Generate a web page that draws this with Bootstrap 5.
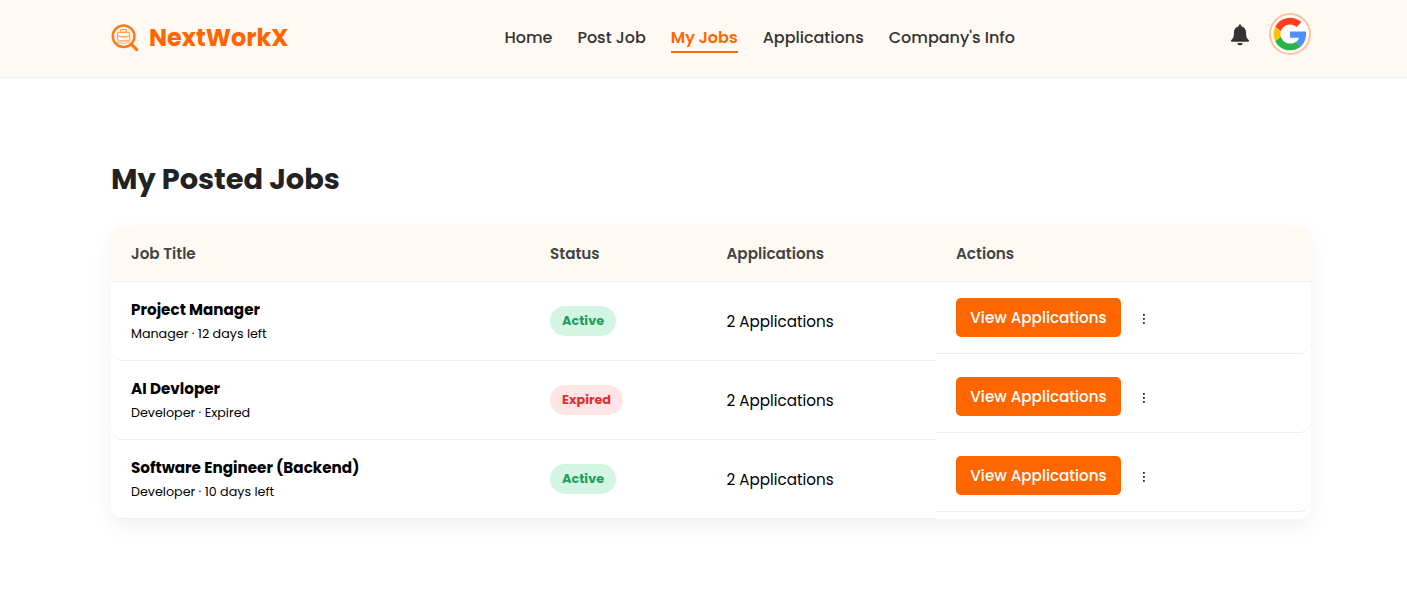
<!DOCTYPE html>
<html lang="en">
<head>
<meta charset="utf-8">
<meta name="viewport" content="width=device-width, initial-scale=1">
<title>NextWorkX – My Jobs</title>
<link href="https://cdn.jsdelivr.net/npm/bootstrap@5.3.0/dist/css/bootstrap.min.css" rel="stylesheet">
<style>
  :root { --orange: #ff6600; --cream: #fff9f3; --rule: #eee; }
  body { font-family: Poppins, Inter, sans-serif; color: #000; background: #fff; min-height: 593px; }
  .page-wrap { width: 1200px; margin-left: 111px; }
  .topbar { height: 78px; background: var(--cream); border-bottom: 1px solid var(--rule); }
  .brand-logo { margin-top: 24px; }
  .brand-name { font-size: 24px; font-weight: 700; color: var(--orange); line-height: 36px; margin: 20px 0 0 10px; width: 355.4px; }
  .menu { gap: 25px; margin-top: 26px; }
  .menu a { font-size: 16px; font-weight: 500; line-height: 24px; color: #333; text-decoration: none; height: 27px; white-space: nowrap; }
  .menu a.current { font-weight: 600; color: var(--orange); border-bottom: 2px solid var(--orange); }
  .bell { margin: 11px 19px 0 0; }
  .avatar { width: 42px; height: 42px; border: 2px solid #ffc1a0; background: #fff; }
  .page-title { font-size: 28.8px; font-weight: 700; color: #222; line-height: 42px; margin: 80px 0 26px; }
  .jobs { border-radius: 12px; background: #fff; box-shadow: 0 8px 24px rgba(0,0,0,.06); }
  .jobs-row { display: grid; grid-template-columns: 419px 176.5px 229.5px 375px; }
  .jobs-head { height: 56px; background: var(--cream); border-bottom: 1px solid var(--rule); border-radius: 12px 12px 0 0; font-size: 15.2px; font-weight: 600; color: #444; line-height: 55px; }
  .jobs-head > div { padding-left: 20px; }
  .job { height: 79px; }
  .job > div { padding-left: 20px; border-bottom: 1px solid var(--rule); }
  .job > div:first-child { border-bottom-left-radius: 12px; }
  .job > .act { height: 72px; border-bottom-right-radius: 12px; }
  .job-name { font-size: 15.2px; font-weight: 700; line-height: 22px; padding-top: 17px; }
  .job-meta { font-size: 12.7px; line-height: 20px; margin-top: 3px; }
  .pill { height: 30px; padding: 0 12px; border-radius: 20px; font-size: 12.8px; font-weight: 700; line-height: 30px; white-space: nowrap; }
  .pill-on { background: #d4f5e3; color: #1e9e5a; }
  .pill-off { background: #ffe5e5; color: #e03131; }
  .count { font-size: 15.2px; padding-top: 2px; }
  .btn-view, .btn-view:hover { width: 165px; height: 39px; padding: 0; border: 0; border-radius: 5px; background: var(--orange); color: #fff; font-size: 15.2px; font-weight: 500; line-height: 39px; }
  .dots { margin-left: 21px; }
</style>
</head>
<body>
<header class="topbar">
  <div class="page-wrap d-flex">
    <svg class="brand-logo flex-shrink-0" width="28" height="28" viewBox="0 0 28 28" fill="none" stroke="#ff7a1a">
      <circle cx="12.6" cy="12.2" r="10.8" stroke-width="2.5"/>
      <path d="M20.5 20.4l5.2 5.2" stroke-width="3.2" stroke-linecap="round"/>
      <g stroke="#ffa05a" stroke-width="1.2"><rect x="6.5" y="8.4" width="12.2" height="8.4" rx="1.5"/><path d="M9.8 8.2V6.3q0-.8.8-.8h4q.8 0 .8.8v1.900M6.700 11.400q6 3.400 11.800 0M11.500 12.600h2.300"/><path d="M5.700 18.200q7 2.600 13.800 0" stroke-width=".8"/></g>
    </svg>
    <div class="brand-name flex-shrink-0">NextWorkX</div>
    <nav class="menu d-flex flex-shrink-0">
      <a href="#">Home</a>
      <a href="#">Post Job</a>
      <a href="#" class="current">My Jobs</a>
      <a href="#">Applications</a>
      <a href="#">Company's Info</a>
    </nav>
    <div class="d-flex ms-auto" style="padding-top:13px">
      <svg class="bell" width="20" height="22" viewBox="0 0 20 22" fill="#333">
        <path d="M10 .5c.9 0 1.500.6 1.500 1.500v.5c3 .7 4.600 3 4.600 6.200 0 4.400 1 5.800 2.600 7.300.7.700.4 1.700-.6 1.700H1.900c-1 0-1.300-1-.6-1.700C2.900 14.500 3.900 13.100 3.900 8.700c0-3.200 1.600-5.500 4.600-6.200V2c0-.9.600-1.500 1.500-1.500z"/>
        <path d="M7.300 19h5.400c-.2 1.400-1.300 2.300-2.700 2.300S7.500 20.400 7.300 19z"/>
      </svg>
      <div class="avatar rounded-circle d-flex align-items-center justify-content-center">
        <svg width="34" height="34" viewBox="0 0 48 48">
          <path fill="#ff3d1f" d="M24 10.500c3.600 0 6.800 1.200 9.300 3.600l6.900-6.900C36 3.300 30.500 1 24 1 14.900 1 7 6.200 3.200 13.900l8 6.200C13.100 14.500 18 10.500 24 10.500z"/>
          <path fill="#ffc107" d="M11.200 20.100l-8-6.200C1.700 17 .8 20.400.8 24s.9 7 2.400 10.100l8-6.200c-.9-2.500-.9-5.300 0-7.800z"/>
          <path fill="#28b446" d="M24 47c6.300 0 11.700-2.100 15.600-5.700l-7.700-6c-2.100 1.400-4.800 2.200-7.900 2.200-6 0-10.900-4-12.800-9.600l-8 6.200C7 41.800 14.900 47 24 47z"/>
          <path fill="#518ef8" d="M46.300 20.500H24v8.700h12.700c-.6 2.500-2.200 4.600-4.800 6.100l7.700 6c4.500-4.200 7.200-10.400 7.200-17.300 0-1.200-.2-2.400-.5-3.500z"/>
        </svg>
      </div>
    </div>
  </div>
</header>

<main class="page-wrap">
  <h1 class="page-title">My Posted Jobs</h1>
  <section class="jobs">
    <div class="jobs-row jobs-head"><div>Job Title</div><div>Status</div><div>Applications</div><div>Actions</div></div>

    <div class="jobs-row job">
      <div><div class="job-name">Project Manager</div><div class="job-meta">Manager · 12 days left</div></div>
      <div class="d-flex align-items-center"><span class="pill pill-on">Active</span></div>
      <div class="d-flex align-items-center count">2 Applications</div>
      <div class="act d-flex align-items-center"><button class="btn btn-view">View Applications</button><svg class="dots" width="4" height="12" viewBox="0 0 4 12" fill="#222"><path d="M1 2h1.800v1.800H1zM1 6h1.800v1.800H1zM1 10h1.800v1.800H1z"/></svg></div>
    </div>

    <div class="jobs-row job">
      <div><div class="job-name">AI Devloper</div><div class="job-meta">Developer · Expired</div></div>
      <div class="d-flex align-items-center"><span class="pill pill-off">Expired</span></div>
      <div class="d-flex align-items-center count">2 Applications</div>
      <div class="act d-flex align-items-center"><button class="btn btn-view">View Applications</button><svg class="dots" width="4" height="12" viewBox="0 0 4 12" fill="#222"><path d="M1 2h1.800v1.800H1zM1 6h1.800v1.800H1zM1 10h1.800v1.800H1z"/></svg></div>
    </div>

    <div class="jobs-row job">
      <div><div class="job-name">Software Engineer (Backend)</div><div class="job-meta">Developer · 10 days left</div></div>
      <div class="d-flex align-items-center"><span class="pill pill-on">Active</span></div>
      <div class="d-flex align-items-center count">2 Applications</div>
      <div class="act d-flex align-items-center"><button class="btn btn-view">View Applications</button><svg class="dots" width="4" height="12" viewBox="0 0 4 12" fill="#222"><path d="M1 2h1.800v1.800H1zM1 6h1.800v1.800H1zM1 10h1.800v1.800H1z"/></svg></div>
    </div>
  </section>
</main>
<script src="https://cdn.jsdelivr.net/npm/bootstrap@5.3.0/dist/js/bootstrap.bundle.min.js"></script>
</body>
</html>
